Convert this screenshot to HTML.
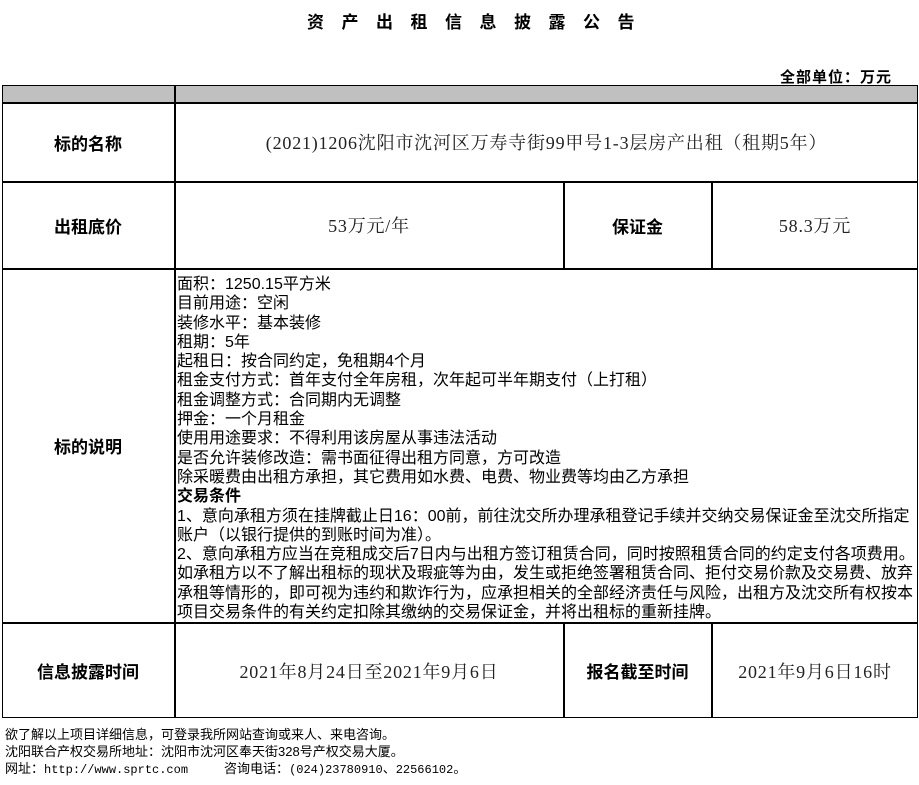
<!DOCTYPE html>
<html><head><meta charset="utf-8"><style>
*{margin:0;padding:0;box-sizing:border-box}
body{width:919px;height:785px;background:#fff;position:relative;font-family:"Liberation Serif","Noto Serif CJK SC","Noto Sans CJK SC",serif;color:#000;overflow:hidden}
.a{position:absolute}
.c{position:absolute;display:flex;align-items:center;justify-content:center;font-size:16px}
.h{font-family:"Liberation Sans","Noto Sans CJK SC",sans-serif;font-weight:bold;font-size:17px}
.v{color:#222;font-size:18px;letter-spacing:0.8px}
.s{font-family:"Liberation Sans","Noto Sans CJK SC",sans-serif;font-size:13px;line-height:17px;white-space:nowrap}
.m{font-family:'Liberation Mono',monospace;font-size:12px}
</style></head><body>
<div class="a h" style="left:12px;width:935px;top:8px;text-align:center;font-size:17px;letter-spacing:17.5px;">资产出租信息披露公告</div>
<div class="a h" style="left:780px;top:66px;font-size:15px;letter-spacing:1px">全部单位：万元</div>
<div class="a" style="left:2px;top:85px;width:916px;height:18px;background:#c0c0c0"></div>
<div class="a" style="left:2px;top:85px;width:916px;height:633px;border:1.5px solid #000"></div>
<div class="a" style="left:2px;top:102px;width:916px;height:1.5px;background:#000"></div>
<div class="a" style="left:2px;top:181px;width:916px;height:1.5px;background:#000"></div>
<div class="a" style="left:2px;top:268px;width:916px;height:1.5px;background:#000"></div>
<div class="a" style="left:2px;top:622px;width:916px;height:1.5px;background:#000"></div>
<div class="a" style="left:174px;top:85px;width:1.5px;height:633px;background:#000"></div>
<div class="a" style="left:563px;top:181px;width:1.5px;height:87px;background:#000"></div>
<div class="a" style="left:711px;top:181px;width:1.5px;height:87px;background:#000"></div>
<div class="a" style="left:563px;top:622px;width:1.5px;height:96px;background:#000"></div>
<div class="a" style="left:711px;top:622px;width:1.5px;height:96px;background:#000"></div>
<div class="c h" style="left:2px;top:103px;width:172px;height:78px">标的名称</div>
<div class="c v" style="left:175px;top:103px;width:743px;height:78px">(2021)1206沈阳市沈河区万寿寺街99甲号1-3层房产出租（租期5年）</div>
<div class="c h" style="left:2px;top:182px;width:172px;height:86px">出租底价</div>
<div class="c v" style="left:175px;top:182px;width:388px;height:86px">53万元/年</div>
<div class="c h" style="left:564px;top:182px;width:147px;height:86px">保证金</div>
<div class="c v" style="left:712px;top:182px;width:206px;height:86px">58.3万元</div>
<div class="c h" style="left:2px;top:269px;width:172px;height:353px">标的说明</div>
<div class="a" style="left:177px;top:275px;font-size:16px;line-height:19.3px;white-space:nowrap;font-family:'Liberation Sans','Noto Sans CJK SC',sans-serif">
面积：1250.15平方米<br>目前用途：空闲<br>装修水平：基本装修<br>租期：5年<br>起租日：按合同约定，免租期4个月<br>租金支付方式：首年支付全年房租，次年起可半年期支付（上打租）<br>租金调整方式：合同期内无调整<br>押金：一个月租金<br>使用用途要求：不得利用该房屋从事违法活动<br>是否允许装修改造：需书面征得出租方同意，方可改造<br>除采暖费由出租方承担，其它费用如水费、电费、物业费等均由乙方承担<br><b>交易条件</b><br>1、意向承租方须在挂牌截止日16：00前，前往沈交所办理承租登记手续并交纳交易保证金至沈交所指定<br>账户（以银行提供的到账时间为准）。<br>2、意向承租方应当在竞租成交后7日内与出租方签订租赁合同，同时按照租赁合同的约定支付各项费用。<br>如承租方以不了解出租标的现状及瑕疵等为由，发生或拒绝签署租赁合同、拒付交易价款及交易费、放弃<br>承租等情形的，即可视为违约和欺诈行为，应承担相关的全部经济责任与风险，出租方及沈交所有权按本<br>项目交易条件的有关约定扣除其缴纳的交易保证金，并将出租标的重新挂牌。</div>
<div class="c h" style="left:2px;top:623px;width:172px;height:95px">信息披露时间</div>
<div class="c v" style="left:175px;top:623px;width:388px;height:95px">2021年8月24日至2021年9月6日</div>
<div class="c h" style="left:564px;top:623px;width:147px;height:95px">报名截至时间</div>
<div class="c v" style="left:712px;top:623px;width:206px;height:95px">2021年9月6日16时</div>
<div class="a s" style="left:5px;top:726px">欲了解以上项目详细信息，可登录我所网站查询或来人、来电咨询。<br>沈阳联合产权交易所地址：沈阳市沈河区奉天街328号产权交易大厦。<br>网址：<span class="m">http://www.sprtc.com</span><span style="display:inline-block;width:36px"></span>咨询电话：<span class="m">(024)23780910</span>、<span class="m">22566102</span>。</div>
</body></html>
